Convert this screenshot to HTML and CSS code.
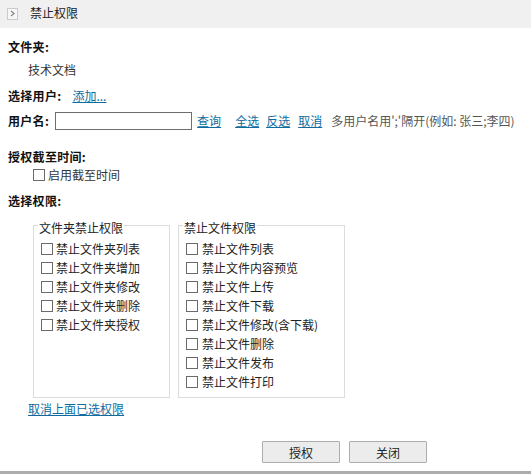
FILE: index.html
```html
<!DOCTYPE html>
<html lang="zh-CN">
<head>
<meta charset="utf-8">
<title>禁止权限</title>
<link rel="stylesheet" href="styles.css">
</head>
<body>
<div class="page">
  <div class="header">
    <span class="hicon"><svg width="7" height="7" viewBox="0 0 7 7"><path d="M2 1 L5 3.5 L2 6" fill="none" stroke="#8a8a8a" stroke-width="1.3"/></svg></span>
    <span class="htitle">禁止权限</span>
  </div>
  <div class="content">
    <div class="row r1 bold">文件夹:</div>
    <div class="row r2 indent">技术文档</div>
    <div class="row r3"><span class="bold">选择用户:</span><a class="link add">添加...</a></div>
    <div class="row r4">
      <span class="bold">用户名:</span>
      <span class="input"></span>
      <a class="link q">查询</a>
      <a class="link sa">全选</a>
      <a class="link inv">反选</a>
      <a class="link cc">取消</a>
      <span class="hint">多用户名用';'隔开(例如: 张三;李四)</span>
    </div>
    <div class="row r5 bold">授权截至时间:</div>
    <div class="row r6"><span class="cb"></span><span class="cbl">启用截至时间</span></div>
    <div class="row r7 bold">选择权限:</div>
    <div class="groups">
      <fieldset class="grp g1">
        <legend>文件夹禁止权限</legend>
        <div class="item"><span class="cb"></span><span>禁止文件夹列表</span></div>
        <div class="item"><span class="cb"></span><span>禁止文件夹增加</span></div>
        <div class="item"><span class="cb"></span><span>禁止文件夹修改</span></div>
        <div class="item"><span class="cb"></span><span>禁止文件夹删除</span></div>
        <div class="item"><span class="cb"></span><span>禁止文件夹授权</span></div>
      </fieldset>
      <fieldset class="grp g2">
        <legend>禁止文件权限</legend>
        <div class="item"><span class="cb"></span><span>禁止文件列表</span></div>
        <div class="item"><span class="cb"></span><span>禁止文件内容预览</span></div>
        <div class="item"><span class="cb"></span><span>禁止文件上传</span></div>
        <div class="item"><span class="cb"></span><span>禁止文件下载</span></div>
        <div class="item"><span class="cb"></span><span>禁止文件修改(含下载)</span></div>
        <div class="item"><span class="cb"></span><span>禁止文件删除</span></div>
        <div class="item"><span class="cb"></span><span>禁止文件发布</span></div>
        <div class="item"><span class="cb"></span><span>禁止文件打印</span></div>
      </fieldset>
    </div>
    <div class="row r8 indent"><a class="link">取消上面已选权限</a></div>
    <div class="buttons">
      <span class="btn">授权</span>
      <span class="btn">关闭</span>
    </div>
  </div>
  <div class="spacer"></div>
  <div class="footer"></div>
</div>
</body>
</html>
```
FILE: styles.css
```css
html, body {
  margin: 0;
  padding: 0;
  background: #fff;
}
body {
  font-family: "Noto Sans CJK SC", "Microsoft YaHei", "Noto Sans", sans-serif;
  font-size: 12px;
  color: #222;
}
.page {
  height: 474px;
  display: flex;
  flex-direction: column;
}
.header {
  height: 28px;
  background: #f0f0f0;
  display: flex;
  align-items: center;
  padding-left: 7px;
  box-sizing: border-box;
  flex-shrink: 0;
}
.hicon {
  width: 9px;
  height: 10px;
  border: 1px solid #cbcbcb;
  background: #f7f7f7;
  display: flex;
  align-items: center;
  justify-content: center;
  margin-top: -1px;
}
.htitle {
  margin-left: 12px;
  color: #222;
  line-height: 14px;
  margin-top: -2px;
}
.content {
  padding: 9px 8px 0 8px;
}
.row {
  height: 20px;
  line-height: 20px;
  display: flex;
  align-items: center;
  white-space: nowrap;
}
.bold {
  font-weight: bold;
  color: #111;
  letter-spacing: 0.3px;
}
.indent {
  padding-left: 20px;
}
.r2 { margin-top: 3px; color: #333; }
.r3 { margin-top: 6px; }
.r4 { margin-top: 5px; }
.r5 { margin-top: 16px; }
.r6 { margin-top: -1px; height: 18px; padding-left: 25px; }
.r7 { margin-top: 7px; }
.r8 { margin-top: 1px; }
.link {
  color: #0d6c9f;
  text-decoration: underline;
  cursor: pointer;
}
.add { margin-left: 11px; }
.input {
  width: 135px;
  height: 16px;
  border: 1px solid #6e6e6e;
  margin-left: 6px;
  background: #fff;
}
.q { margin-left: 5px; }
.sa { margin-left: 14px; }
.inv { margin-left: 7px; }
.cc { margin-left: 8px; }
.hint {
  margin-left: 9px;
  color: #555;
}
.cb {
  width: 10px;
  height: 10px;
  border: 1px solid #6a6a6a;
  background: #fff;
  flex-shrink: 0;
  display: inline-block;
}
.cbl {
  margin-left: 3px;
  color: #333;
}
.groups {
  display: flex;
  gap: 8px;
  margin-top: 4px;
  padding-left: 25px;
  align-items: stretch;
}
.grp {
  margin: 0;
  border: 1px solid #dcdcdc;
  padding: 4px 6px 6px 7px;
  box-sizing: border-box;
}
.g1 { width: 137px; }
.g2 { width: 167px; }
.grp legend {
  padding: 6px 1px 0 1px;
  line-height: 14px;
  margin-left: -3px;
  color: #222;
}
.item {
  height: 19px;
  display: flex;
  align-items: center;
  white-space: nowrap;
  color: #222;
}
.item span + span {
  margin-left: 3px;
}
.g2 .item span + span {
  margin-left: 4px;
}
.buttons {
  display: flex;
  gap: 9px;
  padding-left: 254px;
  margin-top: 22px;
}
.btn {
  width: 76px;
  height: 20px;
  border: 1px solid #adadad;
  background: #ececec;
  display: flex;
  align-items: center;
  justify-content: center;
  color: #222;
  border-radius: 1px;
}
.spacer {
  flex: 1;
}
.footer {
  height: 3px;
  background: #adadad;
  flex-shrink: 0;
}
```
